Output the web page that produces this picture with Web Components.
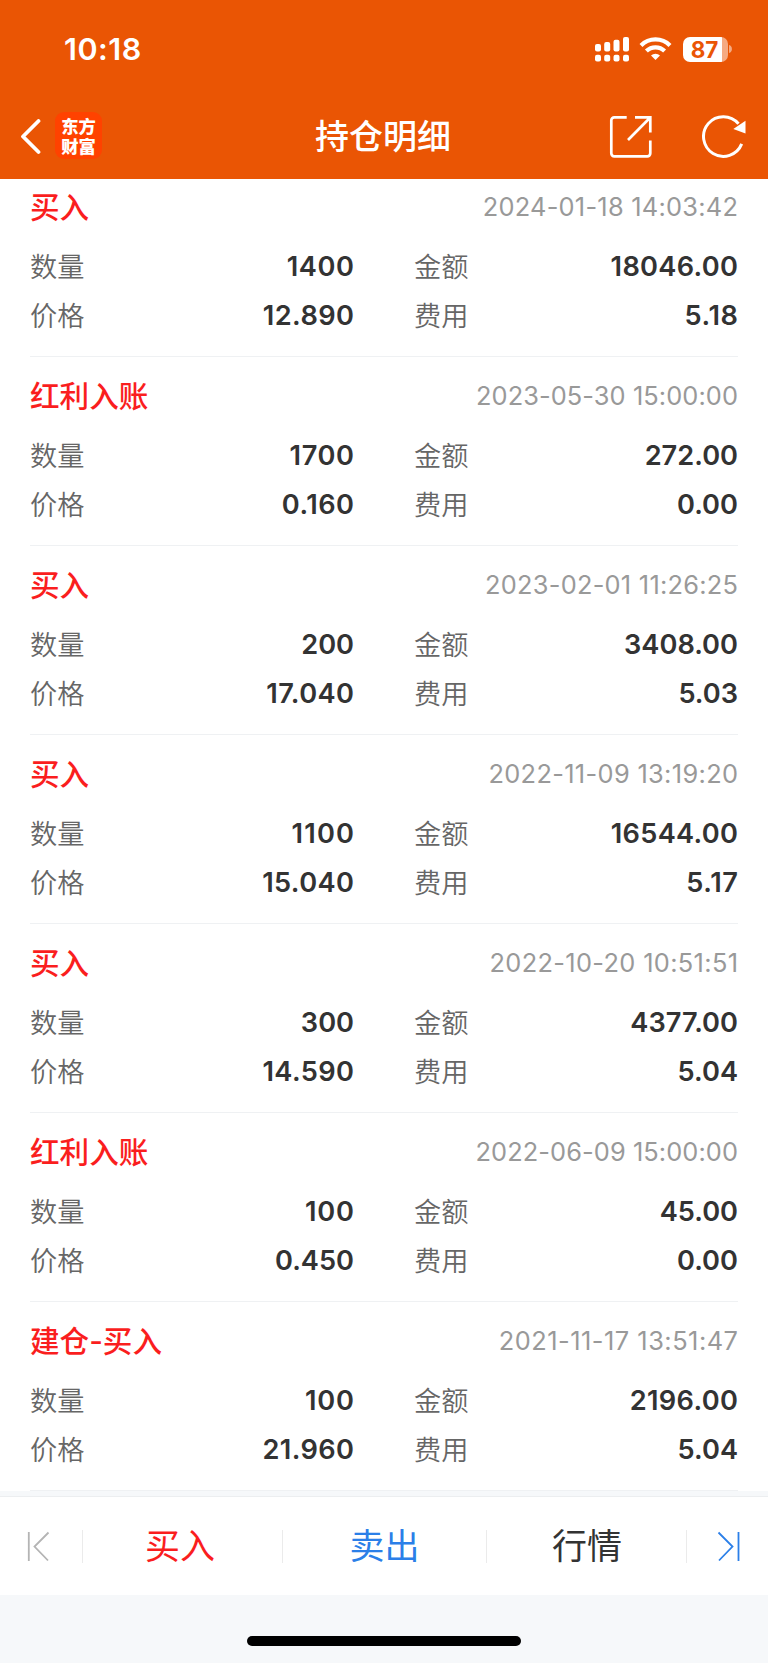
<!DOCTYPE html>
<html lang="zh-CN">
<head>
<meta charset="utf-8">
<meta name="viewport" content="width=device-width, initial-scale=1">
<title>持仓明细</title>
<style>
    html, body {
        margin: 0;
        height: 1663px;
        overflow: hidden;
        background: #f6f8fa;
        font-family: Inter, "Noto Sans CJK SC", sans-serif;
    }
</style>
</head>
<body>
<position-page>
    <status-bar slot="header" time="10:18" battery="87"></status-bar>
    <nav-bar slot="header">持仓明细</nav-bar>

    <trade-record date="2024-01-18 14:03:42" count="1400" amount="18046.00" price="12.890" fee="5.18">买入</trade-record>
    <trade-record date="2023-05-30 15:00:00" count="1700" amount="272.00" price="0.160" fee="0.00">红利入账</trade-record>
    <trade-record date="2023-02-01 11:26:25" count="200" amount="3408.00" price="17.040" fee="5.03">买入</trade-record>
    <trade-record date="2022-11-09 13:19:20" count="1100" amount="16544.00" price="15.040" fee="5.17">买入</trade-record>
    <trade-record date="2022-10-20 10:51:51" count="300" amount="4377.00" price="14.590" fee="5.04">买入</trade-record>
    <trade-record date="2022-06-09 15:00:00" count="100" amount="45.00" price="0.450" fee="0.00">红利入账</trade-record>
    <trade-record date="2021-11-17 13:51:47" count="100" amount="2196.00" price="21.960" fee="5.04">建仓-买入</trade-record>

    <action-bar slot="footer">
        <span style="color: #fa1e1e">买入</span>
        <span style="color: #2b7fe8">卖出</span>
        <span style="color: #333">行情</span>
    </action-bar>
    <home-indicator slot="footer"></home-indicator>
</position-page>

<script>
    /**
     * Base element, renders its template into an open shadow dom.
     */
    class BaseElement extends HTMLElement {
        constructor() {
            super();

            this.$shadowDom = this.attachShadow({ mode: 'open' });
        }

        connectedCallback() {
            const $template = document.createElement('template');
            $template.innerHTML = this.template();

            this.$shadowDom.replaceChildren($template.content.cloneNode(true));
        }

        /**
         * Get an attribute's value.
         *
         * @param {string} name The name of the attribute.
         * @returns {string}
         */
        _attr(name) {
            return this.getAttribute(name) || '';
        }
    }

    /**
     * The page: fixed header and footer, with the records between.
     */
    class PositionPage extends BaseElement {
        template() {
            return `
                <style>
                    :host {
                        display: flex;
                        flex-direction: column;
                        height: 1663px;
                    }
                    header {
                        flex: none;
                        height: 179px;
                        background: #ea5504;
                    }
                    main {
                        flex: none;
                        height: 1312px;
                        display: flex;
                        flex-direction: column;
                        justify-content: flex-end;
                        overflow: hidden;
                        background: #fff;
                    }
                    footer {
                        flex: 1;
                        padding-top: 5px;
                    }
                </style>
                <header><slot name="header"></slot></header>
                <main><slot></slot></main>
                <footer><slot name="footer"></slot></footer>
            `;
        }
    }

    class StatusBar extends BaseElement {
        template() {
            return `
                <style>
                    :host {
                        display: flex;
                        align-items: center;
                        justify-content: space-between;
                        box-sizing: border-box;
                        height: 98px;
                        padding: 0 36px 0 64px;
                        color: #fff;
                    }
                    .time {
                        margin-bottom: 2px;
                        font-size: 30.5px;
                        font-weight: 600;
                        letter-spacing: 0.5px;
                    }
                    .icons {
                        display: flex;
                        align-items: center;
                    }
                    .signal { margin-right: 10px; }
                    .wifi { margin-right: 11px; }
                    .battery {
                        width: 45px;
                        height: 25px;
                        border-radius: 7px;
                        display: flex;
                        align-items: center;
                        justify-content: center;
                        box-sizing: border-box;
                        padding-right: 1px;
                        background: linear-gradient(to right, #fff 39px, #f5aa82 39px);
                        color: #ea5504;
                        font-size: 22.5px;
                        font-weight: 700;
                    }
                    .cap { margin-left: 1.5px; }
                </style>
                <span class="time">${this._attr('time')}</span>
                <div class="icons">
                    <svg class="signal" width="34" height="26" viewBox="0 0 34 26" fill="#fff">
                        <rect x="0" y="8" width="6" height="7.5" rx="2"/>
                        <rect x="9.2" y="6" width="6" height="9.5" rx="2"/>
                        <rect x="18.5" y="3.7" width="6" height="11.8" rx="2"/>
                        <rect x="28" y="1" width="6" height="14.5" rx="2"/>
                        <rect x="0" y="18.8" width="6" height="6.6" rx="2"/>
                        <rect x="9.2" y="18.8" width="6" height="6.6" rx="2"/>
                        <rect x="18.5" y="18.8" width="6" height="6.6" rx="2"/>
                        <rect x="28" y="18.8" width="6" height="6.6" rx="2"/>
                    </svg>
                    <svg class="wifi" width="33" height="24" viewBox="0 0 33 24" fill="none" stroke="#fff" stroke-width="4.2">
                        <path d="M2 8.4a20.5 20.5 0 0 1 29 0"/>
                        <path d="M7.4 14a13 13 0 0 1 18.2 0"/>
                        <path d="M12 18.5a6.6 6.6 0 0 1 9 0L16.5 23z" fill="#fff" stroke="none"/>
                    </svg>
                    <div class="battery">${this._attr('battery')}</div>
                    <svg class="cap" width="3" height="8" viewBox="0 0 3 8"><path d="M0 0a4.2 4.2 0 0 1 0 8z" fill="#f5aa82"/></svg>
                </div>
            `;
        }
    }

    class NavBar extends BaseElement {
        template() {
            return `
                <style>
                    :host {
                        display: grid;
                        grid-template-columns: 1fr auto 1fr;
                        align-items: center;
                        box-sizing: border-box;
                        height: 77px;
                        padding: 0 22px 0 20px;
                        color: #fff;
                    }
                    .left, .right {
                        display: flex;
                        align-items: center;
                    }
                    .right { justify-content: flex-end; gap: 50px; }
                    .logo {
                        width: 47px;
                        height: 47px;
                        margin: -2px 0 0 14px;
                        padding-top: 2px;
                        box-sizing: border-box;
                        border-radius: 9px;
                        display: flex;
                        flex-direction: column;
                        justify-content: center;
                        align-items: center;
                        background: #ff4200;
                        font: 900 17.3px/20px "Liberation Sans", "Noto Sans CJK SC", sans-serif;
                    }
                    h1 {
                        margin: 0 0 4px;
                        font-size: 34px;
                        font-weight: 500;
                    }
                </style>
                <div class="left">
                    <svg width="21" height="36" viewBox="0 0 21 36" fill="none" stroke="#fff" stroke-width="3.8" stroke-linecap="round" stroke-linejoin="round"><path d="M18.5 2L3 17.5 18.5 33"/></svg>
                    <div class="logo"><span>东方</span><span>财富</span></div>
                </div>
                <h1><slot></slot></h1>
                <div class="right">
                    <svg width="43" height="43" viewBox="0 0 43 43" fill="none" stroke="#fff" stroke-width="2.7">
                        <path d="M17.7 2.3H5.3a3 3 0 0 0-3 3v33a3 3 0 0 0 3 3h33a3 3 0 0 0 3-3V25.5"/>
                        <path d="M26 2.3h15.3v15.2M41 2.8L19 25"/>
                    </svg>
                    <svg width="44" height="43" viewBox="0 0 44 43">
                        <path d="M36.5 8.8A19.8 19.8 0 1 0 39.7 28.9" fill="none" stroke="#fff" stroke-width="3"/>
                        <path d="M43.5 5.7v12.8L31.3 14z" fill="#fff"/>
                    </svg>
                </div>
            `;
        }
    }

    /**
     * One trade: its kind (slot), date and four figures.
     */
    class TradeRecord extends BaseElement {
        template() {
            return `
                <style>
                    :host {
                        display: block;
                        flex: none;
                        box-sizing: border-box;
                        height: 189px;
                        margin: 0 30px;
                        padding-top: 19px;
                        border-bottom: 1px solid #eff1f3;
                    }
                    .head {
                        display: flex;
                        justify-content: space-between;
                        align-items: center;
                        height: 40px;
                        margin-bottom: 14px;
                    }
                    .kind {
                        margin-bottom: 4px;
                        color: #fa1e1e;
                        font-size: 29.6px;
                        font-weight: 500;
                    }
                    time {
                        margin-bottom: 1px;
                        color: #999;
                        font-size: 25.4px;
                    }
                    dl {
                        display: grid;
                        grid-template-columns: 1fr 1fr;
                        grid-auto-rows: 49.5px;
                        column-gap: 60px;
                        margin: 0;
                    }
                    dl div {
                        display: flex;
                        justify-content: space-between;
                        align-items: center;
                    }
                    dt {
                        margin-bottom: 2px;
                        color: #666;
                        font-size: 27.2px;
                        font-weight: 350;
                    }
                    dd {
                        margin: 1px 0 0;
                        color: #333;
                        font-size: 27.2px;
                        font-weight: 600;
                    }
                    time, dd {
                        letter-spacing: var(--spacing);
                        margin-right: calc(var(--spacing) * -1);
                    }
                </style>
                <div class="head">
                    <span class="kind"><slot></slot></span>
                    <time style="${this._spacing('date', 0.062)}">${this._attr('date')}</time>
                </div>
                <dl>
                    ${this._figure('数量', 'count')}
                    ${this._figure('金额', 'amount')}
                    ${this._figure('价格', 'price')}
                    ${this._figure('费用', 'fee')}
                </dl>
            `;
        }

        _figure(label, name) {
            return `<div><dt>${label}</dt><dd style="${this._spacing(name, 0.09)}">${this._attr(name)}</dd></div>`;
        }

        /**
         * Spread out figures with a lot of ones, these are narrow in Inter.
         *
         * @param {string} name The name of the attribute.
         * @param {number} extra Extra width for each one, in em.
         * @returns {string}
         */
        _spacing(name, extra) {
            const text = this._attr(name);
            const ones = text.split('1').length - 1;

            return `--spacing: ${(ones * extra / text.length).toFixed(4)}em`;
        }
    }

    class ActionBar extends BaseElement {
        template() {
            return `
                <style>
                    :host {
                        display: grid;
                        grid-template-columns: 82px 1fr 81px;
                        align-items: center;
                        box-sizing: border-box;
                        height: 99px;
                        border-top: 1px solid #eceef0;
                        background: #fff;
                    }
                    .prev, .next { display: flex; }
                    .prev { padding-left: 27px; }
                    .next { justify-content: flex-end; padding-right: 28px; }
                    .actions {
                        display: grid;
                        grid-template-columns: 200px 1fr 200px;
                        border-right: 1px solid #ebebeb;
                    }
                    ::slotted(span) {
                        height: 33px;
                        border-left: 1px solid #ebebeb;
                        font-size: 35px;
                        line-height: 32px;
                        text-align: center;
                    }
                    ::slotted(span:first-child) { padding-right: 5px; }
                    ::slotted(span:last-child) { padding-left: 1px; }
                </style>
                <div class="prev">
                    <svg width="23" height="31" viewBox="0 0 23 31" fill="none" stroke="#b4b4b4" stroke-width="1.8"><path d="M1.8 1v29M21.5 1.5l-14 14 13.5 14"/></svg>
                </div>
                <div class="actions"><slot></slot></div>
                <div class="next">
                    <svg width="23" height="31" viewBox="0 0 23 31" fill="none" stroke="#2b7fe8" stroke-width="1.8"><path d="M21.5 1v29M1.5 1.5l14 14L2 29.5"/></svg>
                </div>
            `;
        }
    }

    class HomeIndicator extends BaseElement {
        template() {
            return `
                <style>
                    :host {
                        display: flex;
                        justify-content: center;
                        padding-top: 41px;
                    }
                    div {
                        width: 274px;
                        height: 10px;
                        border-radius: 5px;
                        background: #000;
                    }
                </style>
                <div></div>
            `;
        }
    }

    customElements.define('position-page', PositionPage);
    customElements.define('status-bar', StatusBar);
    customElements.define('nav-bar', NavBar);
    customElements.define('trade-record', TradeRecord);
    customElements.define('action-bar', ActionBar);
    customElements.define('home-indicator', HomeIndicator);
</script>
</body>
</html>
